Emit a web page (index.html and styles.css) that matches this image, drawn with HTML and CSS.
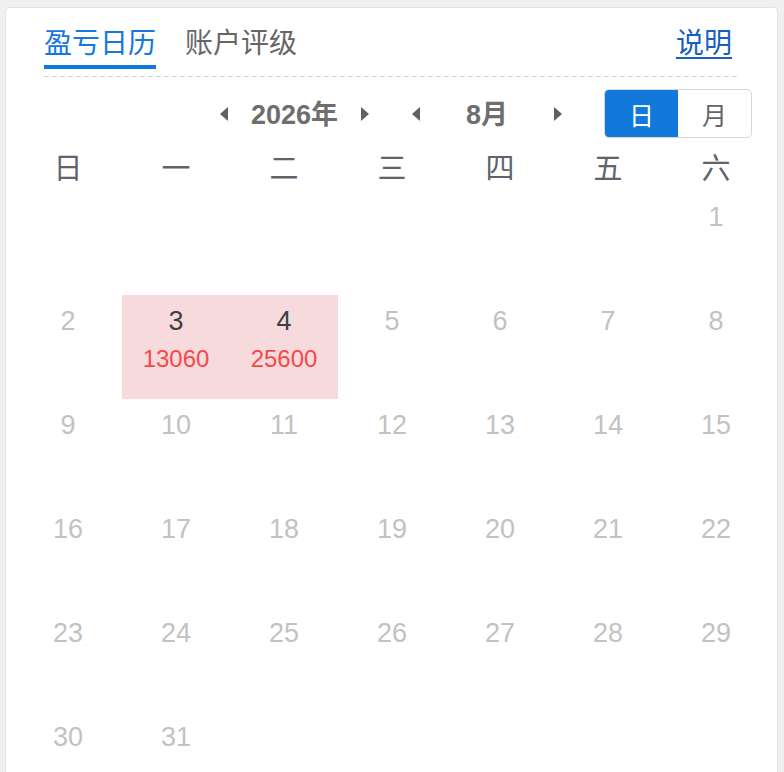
FILE: index.html
```html
<!DOCTYPE html>
<html lang="zh-CN">
<head>
<meta charset="utf-8">
<title>盈亏日历</title>
<link rel="stylesheet" href="styles.css">
</head>
<body>
<div class="card">
  <div class="header">
    <div class="tabs">
      <span class="tab active">盈亏日历</span>
      <span class="tab">账户评级</span>
    </div>
    <a class="help" href="#">说明</a>
  </div>
  <div class="nav">
    <svg class="arrow" width="8" height="14" viewBox="0 0 8 14"><polygon points="8,0 8,14 0,7"/></svg>
    <span class="label">2026年</span>
    <svg class="arrow" width="8" height="14" viewBox="0 0 8 14"><polygon points="0,0 0,14 8,7"/></svg>
    <svg class="arrow gap" width="8" height="14" viewBox="0 0 8 14"><polygon points="8,0 8,14 0,7"/></svg>
    <span class="label month">8月</span>
    <svg class="arrow" width="8" height="14" viewBox="0 0 8 14"><polygon points="0,0 0,14 8,7"/></svg>
    <div class="segment">
      <span class="seg on">日</span>
      <span class="seg">月</span>
    </div>
  </div>
  <div class="weekdays">
    <span>日</span><span>一</span><span>二</span><span>三</span><span>四</span><span>五</span><span>六</span>
  </div>
  <div class="days">
    <div class="day empty"></div><div class="day empty"></div><div class="day empty"></div><div class="day empty"></div><div class="day empty"></div><div class="day empty"></div>
    <div class="day"><span class="num">1</span></div>
    <div class="day"><span class="num">2</span></div>
    <div class="day hl"><span class="num">3</span><span class="val">13060</span></div>
    <div class="day hl"><span class="num">4</span><span class="val">25600</span></div>
    <div class="day"><span class="num">5</span></div>
    <div class="day"><span class="num">6</span></div>
    <div class="day"><span class="num">7</span></div>
    <div class="day"><span class="num">8</span></div>
    <div class="day"><span class="num">9</span></div>
    <div class="day"><span class="num">10</span></div>
    <div class="day"><span class="num">11</span></div>
    <div class="day"><span class="num">12</span></div>
    <div class="day"><span class="num">13</span></div>
    <div class="day"><span class="num">14</span></div>
    <div class="day"><span class="num">15</span></div>
    <div class="day"><span class="num">16</span></div>
    <div class="day"><span class="num">17</span></div>
    <div class="day"><span class="num">18</span></div>
    <div class="day"><span class="num">19</span></div>
    <div class="day"><span class="num">20</span></div>
    <div class="day"><span class="num">21</span></div>
    <div class="day"><span class="num">22</span></div>
    <div class="day"><span class="num">23</span></div>
    <div class="day"><span class="num">24</span></div>
    <div class="day"><span class="num">25</span></div>
    <div class="day"><span class="num">26</span></div>
    <div class="day"><span class="num">27</span></div>
    <div class="day"><span class="num">28</span></div>
    <div class="day"><span class="num">29</span></div>
    <div class="day"><span class="num">30</span></div>
    <div class="day"><span class="num">31</span></div>
  </div>
</div>
</body>
</html>
```
FILE: styles.css
```css
html, body {
  margin: 0;
  padding: 0;
  background: #f0f0f0;
  overflow: hidden;
  height: 100%;
}
body {
  font-family: "Liberation Sans", "Noto Sans CJK SC", sans-serif;
}
.card {
  margin: 7px 0 0 5px;
  width: 771px;
  min-height: 900px;
  background: #fff;
  border: 1px solid #e3e3e3;
  border-radius: 4px;
}
.header {
  margin: 0 38px;
  padding-top: 16px;
  padding-bottom: 8px;
  display: flex;
  justify-content: space-between;
  align-items: flex-start;
  background-image: linear-gradient(to right, #d4d4d4 5px, transparent 5px);
  background-size: 8px 1px;
  background-repeat: repeat-x;
  background-position: left bottom;
}
.tabs {
  display: flex;
  gap: 29px;
}
.tab {
  font-size: 28px;
  line-height: 40px;
  height: 40px;
  padding-bottom: 1px;
  border-bottom: 4px solid transparent;
  color: #666;
}
.tab.active {
  color: #1677dc;
  border-bottom-color: #0f77dd;
}
.help {
  font-size: 28px;
  line-height: 40px;
  color: #1a5fbd;
  text-decoration: underline;
  text-underline-offset: 4px;
  text-decoration-thickness: 2px;
  margin-right: 7px;
}
.nav {
  margin-top: 12px;
  height: 49px;
  display: flex;
  align-items: center;
  justify-content: flex-end;
  padding-right: 25px;
}
.arrow {
  display: block;
  fill: #5b6169;
  flex: none;
}
.arrow.gap {
  margin-left: 43px;
}
.label {
  width: 133px;
  text-align: center;
  font-size: 27px;
  font-weight: bold;
  color: #6e6e6e;
  margin-top: -3px;
}
.label.month {
  width: 134px;
}
.segment {
  margin-left: 42px;
  display: flex;
  height: 47px;
  border: 1px solid #d6d6d6;
  border-radius: 5px;
  overflow: hidden;
}
.seg {
  width: 73px;
  display: flex;
  align-items: center;
  justify-content: center;
  font-size: 25px;
  color: #666;
}
.seg.on {
  background: #1279db;
  color: #fff;
}
.weekdays {
  margin: 9px 6px 0 8px;
  display: grid;
  grid-template-columns: repeat(7, 108px);
  height: 44px;
  line-height: 44px;
  font-size: 29px;
  color: #5f646b;
  text-align: center;
}
.days {
  margin: 0 6px 0 8px;
  display: grid;
  grid-template-columns: repeat(7, 108px);
  grid-auto-rows: 104px;
}
.day {
  display: flex;
  flex-direction: column;
  align-items: center;
  padding-top: 11px;
  box-sizing: border-box;
}
.num {
  font-size: 27px;
  line-height: 30px;
  color: #c2c2c2;
}
.day.hl {
  background: #f6dadc;
}
.day.hl .num {
  color: #3d4146;
}
.val {
  margin-top: 9px;
  font-size: 24px;
  line-height: 28px;
  color: #f5494b;
}
```
